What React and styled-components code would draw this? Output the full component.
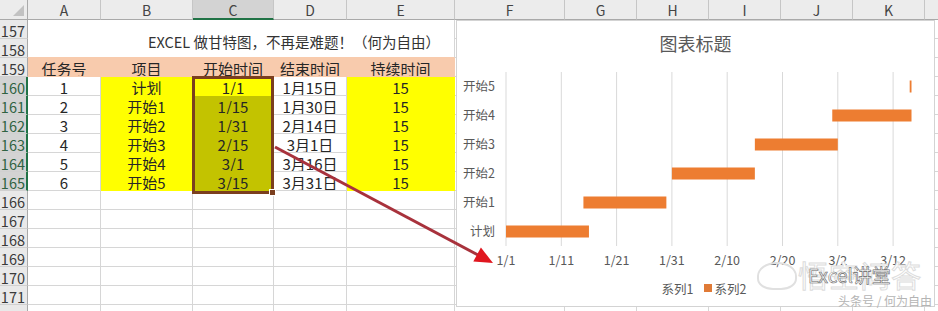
import React from 'react';
import styled, { createGlobalStyle } from 'styled-components';

const GlobalStyle = createGlobalStyle`
  html, body { margin: 0; padding: 0; background: #fff; overflow: hidden; }
  body { font-family: "Noto Sans CJK SC", "Noto Sans", sans-serif; }
`;

const COLS = [
  { key: 'A', w: 73 }, { key: 'B', w: 92 }, { key: 'C', w: 81 }, { key: 'D', w: 73 },
  { key: 'E', w: 108 }, { key: 'F', w: 110 }, { key: 'G', w: 72 }, { key: 'H', w: 72 },
  { key: 'I', w: 72 }, { key: 'J', w: 72 }, { key: 'K', w: 72 }, { key: 'L', w: 72 },
];

const YELLOW = '#ffff00';
const OLIVE = '#c3c300';
const SALMON = '#f8cbad';
const GRID = '#d6d6d6';

const Sheet = styled.div`
  position: relative;
  width: 938px;
  height: 311px;
  overflow: hidden;
  background: #fff;
`;

const Grid = styled.div`
  display: grid;
  grid-template-columns: 28px ${COLS.map((c) => `${c.w}px`).join(' ')};
  grid-template-rows: 20px repeat(16, 19px);
  width: max-content;
`;

const Corner = styled.div`
  box-sizing: border-box;
  background: #ececec;
  border-right: 1px solid #a9a9a9;
  border-bottom: 1px solid #a9a9a9;
  display: flex;
  align-items: flex-end;
  justify-content: flex-end;
  padding: 0 3px 3px 0;
  &::after {
    content: '';
    width: 0;
    height: 0;
    border-left: 11px solid transparent;
    border-bottom: 11px solid #c2c2c2;
  }
`;

const ColHead = styled.div`
  box-sizing: border-box;
  background: ${(p) => (p.$active ? '#d3d3d3' : '#ececec')};
  border-right: 1px solid #c6c6c6;
  border-bottom: ${(p) => (p.$active ? '2px solid #217346' : '1px solid #a9a9a9')};
  color: #444;
  font-size: 14px;
  display: flex;
  align-items: center;
  justify-content: center;
  padding-top: ${(p) => (p.$active ? '1px' : '0')};
`;

const RowHead = styled.div`
  box-sizing: border-box;
  background: ${(p) => (p.$active ? '#d3d3d3' : '#e9e9e9')};
  border-right: ${(p) => (p.$active ? '2px solid #217346' : '1px solid #a9a9a9')};
  border-bottom: 1px solid #d0d0d0;
  color: ${(p) => (p.$active ? '#2f6242' : '#3a3a3a')};
  font-size: 14.5px;
  display: flex;
  align-items: center;
  justify-content: flex-end;
  padding: 3px ${(p) => (p.$active ? '1px' : '2px')} 0 0;
`;

const Cell = styled.div`
  box-sizing: border-box;
  background: ${(p) => p.$fill || '#fff'};
  border-right: 1px solid ${(p) => p.$fill || GRID};
  border-bottom: 1px solid ${(p) => p.$fill || GRID};
  color: #262626;
  font-size: 15px;
  display: flex;
  align-items: center;
  justify-content: center;
  padding-top: 2px;
  white-space: nowrap;
  overflow: hidden;
`;

const TitleCell = styled.div`
  grid-column: 2 / span 5;
  grid-row: span 2;
  box-sizing: border-box;
  background: #fff;
  border-right: 1px solid ${GRID};
  border-bottom: 1px solid ${SALMON};
  color: #333;
  font-size: 14.5px;
  display: flex;
  align-items: center;
  padding: 5px 0 0 120px;
  white-space: nowrap;
`;

const Selection = styled.div`
  position: absolute;
  left: 192px;
  top: 76px;
  width: 82px;
  height: 118px;
  box-sizing: border-box;
  border: 3px solid #7b3f1e;
  pointer-events: none;
  &::after {
    content: '';
    position: absolute;
    right: -5px;
    bottom: -5px;
    width: 5px;
    height: 5px;
    background: #7b3f1e;
    border: 1px solid #fff;
  }
`;

const Chart = styled.div`
  position: absolute;
  left: 456px;
  top: 20px;
  width: 479px;
  height: 287px;
  box-sizing: border-box;
  background: #fff;
  border: 1px solid #d3d3d3;
  display: flex;
  flex-direction: column;
`;

const ChartTitle = styled.div`
  height: 44px;
  line-height: 44px;
  text-align: center;
  font-size: 18px;
  color: #595959;
`;

const Plot = styled.svg`
  display: block;
  width: 477px;
  height: 210px;
  font-family: "Noto Sans CJK SC", "Noto Sans", sans-serif;
`;

const Legend = styled.div`
  height: 26px;
  display: flex;
  align-items: center;
  justify-content: center;
  gap: 10px;
  font-size: 12.5px;
  color: #595959;
  padding-left: 6px;
`;

const LegendItem = styled.div`
  display: flex;
  align-items: center;
  gap: 3px;
`;

const Swatch = styled.span`
  width: 8px;
  height: 8px;
  background: ${(p) => p.$color || 'transparent'};
`;

const Overlay = styled.svg`
  position: absolute;
  left: 0;
  top: 0;
  width: 938px;
  height: 311px;
  pointer-events: none;
`;

const WaterBig = styled.div`
  position: absolute;
  left: 798px;
  top: 256px;
  font-size: 30px;
  line-height: 36px;
  color: #fff;
  -webkit-text-stroke: 1px #dcdcdc;
  letter-spacing: 1px;
  pointer-events: none;
`;

const WaterLogo = styled.div`
  position: absolute;
  left: 757px;
  top: 262px;
  width: 36px;
  height: 24px;
  border: 2px solid #e0e0e0;
  border-radius: 50% 50% 40% 40%;
  pointer-events: none;
`;

const WaterBrand = styled.div`
  position: absolute;
  left: 808px;
  top: 263px;
  font-size: 19px;
  line-height: 24px;
  color: #fff;
  -webkit-text-stroke: 0.6px #666;
  pointer-events: none;
`;

const WaterSmall = styled.div`
  position: absolute;
  left: 838px;
  top: 293px;
  font-size: 12px;
  line-height: 16px;
  color: #b4b4b4;
  pointer-events: none;
`;

const DATA = [
  { n: '1', name: '计划', start: '1/1', end: '1月15日' },
  { n: '2', name: '开始1', start: '1/15', end: '1月30日' },
  { n: '3', name: '开始2', start: '1/31', end: '2月14日' },
  { n: '4', name: '开始3', start: '2/15', end: '3月1日' },
  { n: '5', name: '开始4', start: '3/1', end: '3月16日' },
  { n: '6', name: '开始5', start: '3/15', end: '3月31日' },
];

const HEADERS = ['任务号', '项目', '开始时间', '结束时间', '持续时间'];

const CATS = ['开始5', '开始4', '开始3', '开始2', '开始1', '计划'];
const STARTS = [73, 59, 45, 30, 14, 0];
const XLABELS = ['1/1', '1/11', '1/21', '1/31', '2/10', '2/20', '3/2', '3/12'];

const PL = 49;
const PR = 454.5;
const PT = 7;
const PB = 181;
const SCALE = 5.53;
const BAND = (PB - PT) / 6;

function emptyCells(count, prefix) {
  return Array.from({ length: count }, (_, i) => <Cell key={`${prefix}-e${i}`} />);
}

function buildRows() {
  const out = [];
  for (let r = 157; r <= 172; r += 1) {
    const active = r >= 160 && r <= 165;
    out.push(<RowHead key={`rh${r}`} $active={active}>{r}</RowHead>);
    if (r === 157) {
      out.push(<TitleCell key="title">EXCEL 做甘特图，不再是难题！（何为自由）</TitleCell>);
      out.push(...emptyCells(7, r));
    } else if (r === 158) {
      out.push(...emptyCells(7, r));
    } else if (r === 159) {
      HEADERS.forEach((h) => out.push(<Cell key={`h-${h}`} $fill={SALMON}>{h}</Cell>));
      out.push(...emptyCells(7, r));
    } else if (active) {
      const d = DATA[r - 160];
      out.push(<Cell key={`a${r}`}>{d.n}</Cell>);
      out.push(<Cell key={`b${r}`} $fill={YELLOW}>{d.name}</Cell>);
      out.push(<Cell key={`c${r}`} $fill={r === 160 ? YELLOW : OLIVE}>{d.start}</Cell>);
      out.push(<Cell key={`d${r}`}>{d.end}</Cell>);
      out.push(<Cell key={`e${r}`} $fill={YELLOW}>15</Cell>);
      out.push(...emptyCells(7, r));
    } else {
      out.push(...emptyCells(12, r));
    }
  }
  return out;
}

function GanttChart() {
  return (
    <Chart>
      <ChartTitle>图表标题</ChartTitle>
      <Plot viewBox="0 0 477 210">
        <defs>
          <clipPath id="plotClip">
            <rect x={PL} y={PT} width={PR - PL} height={PB - PT} />
          </clipPath>
        </defs>
        {XLABELS.map((l, i) => {
          const x = PL + i * 10 * SCALE;
          return <line key={`g${l}`} x1={x} x2={x} y1={PT} y2={PB} stroke="#d9d9d9" strokeWidth="1" />;
        })}
        <g clipPath="url(#plotClip)">
          {STARTS.map((s, i) => {
            const cy = PT + BAND * i + BAND / 2;
            return (
              <rect key={`b${i}`} x={PL + s * SCALE} y={cy - 6} width={15 * SCALE} height={12} fill="#ed7d31" />
            );
          })}
        </g>
        {CATS.map((c, i) => {
          const cy = PT + BAND * i + BAND / 2;
          return (
            <text key={`y${c}`} x={38} y={cy + 4.5} textAnchor="end" fontSize="12.5" fill="#595959">{c}</text>
          );
        })}
        {XLABELS.map((l, i) => (
          <text key={`x${l}`} x={PL + i * 10 * SCALE} y={200} textAnchor="middle" fontSize="12.5" fill="#595959">{l}</text>
        ))}
      </Plot>
      <Legend>
        <LegendItem><Swatch />系列1</LegendItem>
        <LegendItem><Swatch $color="#e07a36" />系列2</LegendItem>
      </Legend>
    </Chart>
  );
}

export default function App() {
  return (
    <>
      <GlobalStyle />
      <Sheet>
        <Grid>
          <Corner />
          {COLS.map((c) => (
            <ColHead key={c.key} $active={c.key === 'C'}>{c.key}</ColHead>
          ))}
          {buildRows()}
        </Grid>
        <Selection />
        <GanttChart />
        <WaterLogo />
        <WaterBig>悟空问答</WaterBig>
        <WaterBrand>Excel讲堂</WaterBrand>
        <WaterSmall>头条号 / 何为自由</WaterSmall>
        <Overlay viewBox="0 0 938 311">
          <line x1="275" y1="147" x2="479" y2="255.5" stroke="#a8323c" strokeWidth="3" />
          <polygon points="493,263 473.3,261.6 480.9,247.5" fill="#e0161f" />
        </Overlay>
      </Sheet>
    </>
  );
}
